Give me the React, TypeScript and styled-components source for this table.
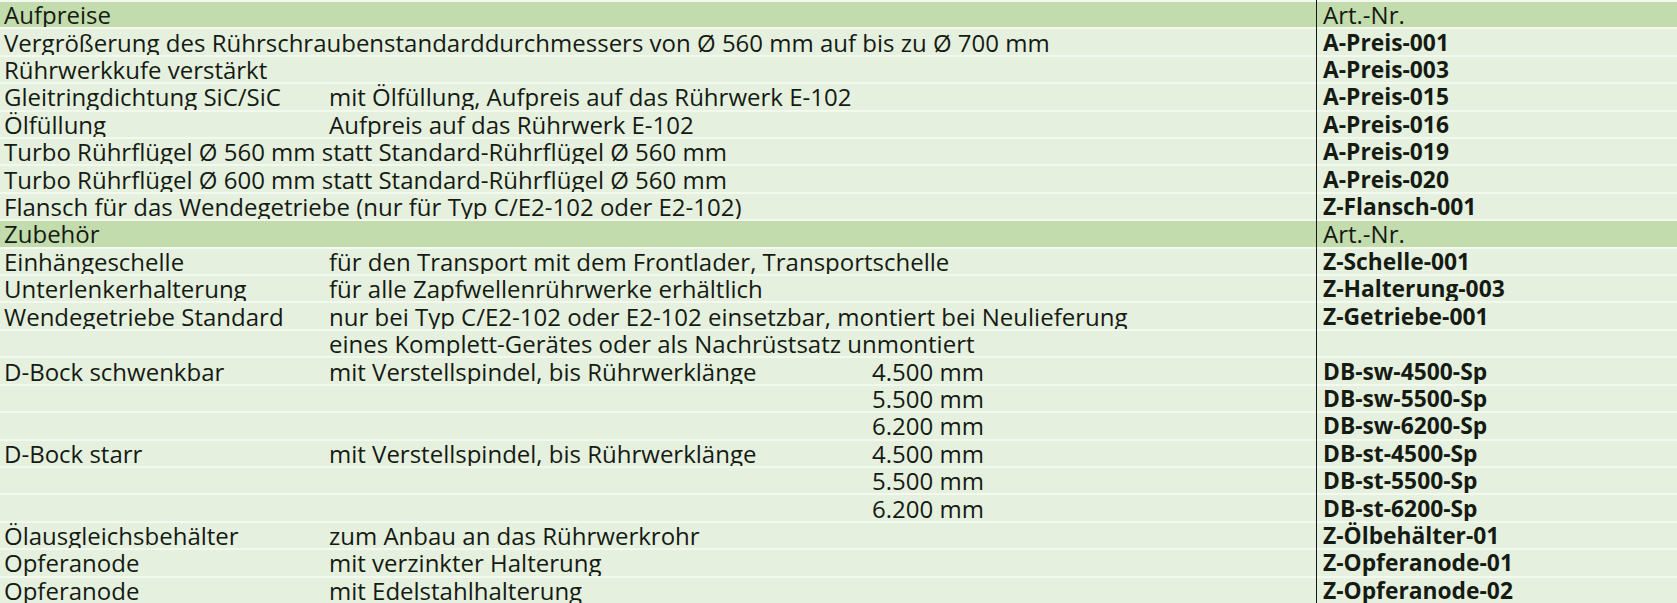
import styled, { createGlobalStyle } from "styled-components";

const GlobalStyle = createGlobalStyle`
  html, body {
    margin: 0;
    padding: 0;
    background: #f3f8ef;
  }
`;

type Line = {
  kind?: "head";
  name?: string;
  text?: string;
  size?: string;
  art?: string;
  wide?: boolean;
};

const lines: Line[] = [
  { kind: "head", name: "Aufpreise", art: "Art.-Nr." },
  {
    name: "Vergrößerung des Rührschraubenstandarddurchmessers von Ø 560 mm auf bis zu Ø 700 mm",
    art: "A-Preis-001",
    wide: true,
  },
  { name: "Rührwerkkufe verstärkt", art: "A-Preis-003", wide: true },
  {
    name: "Gleitringdichtung SiC/SiC",
    text: "mit Ölfüllung, Aufpreis auf das Rührwerk E-102",
    art: "A-Preis-015",
  },
  { name: "Ölfüllung", text: "Aufpreis auf das Rührwerk E-102", art: "A-Preis-016" },
  {
    name: "Turbo Rührflügel Ø 560 mm statt Standard-Rührflügel Ø 560 mm",
    art: "A-Preis-019",
    wide: true,
  },
  {
    name: "Turbo Rührflügel Ø 600 mm statt Standard-Rührflügel Ø 560 mm",
    art: "A-Preis-020",
    wide: true,
  },
  {
    name: "Flansch für das Wendegetriebe (nur für Typ C/E2-102 oder E2-102)",
    art: "Z-Flansch-001",
    wide: true,
  },
  { kind: "head", name: "Zubehör", art: "Art.-Nr." },
  {
    name: "Einhängeschelle",
    text: "für den Transport mit dem Frontlader, Transportschelle",
    art: "Z-Schelle-001",
  },
  {
    name: "Unterlenkerhalterung",
    text: "für alle Zapfwellenrührwerke erhältlich",
    art: "Z-Halterung-003",
  },
  {
    name: "Wendegetriebe Standard",
    text: "nur bei Typ C/E2-102 oder E2-102 einsetzbar, montiert bei Neulieferung",
    art: "Z-Getriebe-001",
  },
  { text: "eines Komplett-Gerätes oder als Nachrüstsatz unmontiert" },
  {
    name: "D-Bock schwenkbar",
    text: "mit Verstellspindel, bis Rührwerklänge",
    size: "4.500 mm",
    art: "DB-sw-4500-Sp",
  },
  { size: "5.500 mm", art: "DB-sw-5500-Sp" },
  { size: "6.200 mm", art: "DB-sw-6200-Sp" },
  {
    name: "D-Bock starr",
    text: "mit Verstellspindel, bis Rührwerklänge",
    size: "4.500 mm",
    art: "DB-st-4500-Sp",
  },
  { size: "5.500 mm", art: "DB-st-5500-Sp" },
  { size: "6.200 mm", art: "DB-st-6200-Sp" },
  { name: "Ölausgleichsbehälter", text: "zum Anbau an das Rührwerkrohr", art: "Z-Ölbehälter-01" },
  { name: "Opferanode", text: "mit verzinkter Halterung", art: "Z-Opferanode-01" },
  { name: "Opferanode", text: "mit Edelstahlhalterung", art: "Z-Opferanode-02" },
];

export default function App() {
  return (
    <>
      <GlobalStyle />
      <Table>
        {lines.map((line, i) =>
          line.kind === "head" ? (
            <HeadRow key={i}>
              <Cell $span={3}>{line.name}</Cell>
              <ArtCell>{line.art}</ArtCell>
            </HeadRow>
          ) : (
            <Row key={i}>
              {line.wide ? (
                <Cell $span={3}>{line.name}</Cell>
              ) : (
                <>
                  <Cell>{line.name}</Cell>
                  <Cell>{line.text}</Cell>
                  <Cell>{line.size}</Cell>
                </>
              )}
              <ArtCell $bold>{line.art}</ArtCell>
            </Row>
          )
        )}
      </Table>
    </>
  );
}

const Table = styled.div`
  width: 1677px;
  height: 603px;
  display: grid;
  grid-template-rows: repeat(22, 1fr);
  font-family: "Open Sans", "Noto Sans", sans-serif;
  font-size: 24px;
  color: #151b13;
  overflow: hidden;
`;

const Row = styled.div`
  display: grid;
  grid-template-columns: 325px 543px 448px 1fr;
  background: #e6f0df;
  box-shadow: inset 0 2px 0 #f4f9f0;
  min-height: 0;
`;

const HeadRow = styled(Row)`
  background: #c3dcad;
`;

const Cell = styled.div<{ $span?: number }>`
  grid-column: span ${(p) => p.$span ?? 1};
  padding: 2px 0 0 4px;
  display: flex;
  align-items: center;
  white-space: nowrap;
  line-height: 25px;
`;

const ArtCell = styled(Cell)<{ $bold?: boolean }>`
  border-left: 1px solid #161616;
  padding-left: 6px;
  font-weight: ${(p) => (p.$bold ? 700 : 400)};
  font-size: ${(p) => (p.$bold ? "22.8px" : "24px")};
`;
